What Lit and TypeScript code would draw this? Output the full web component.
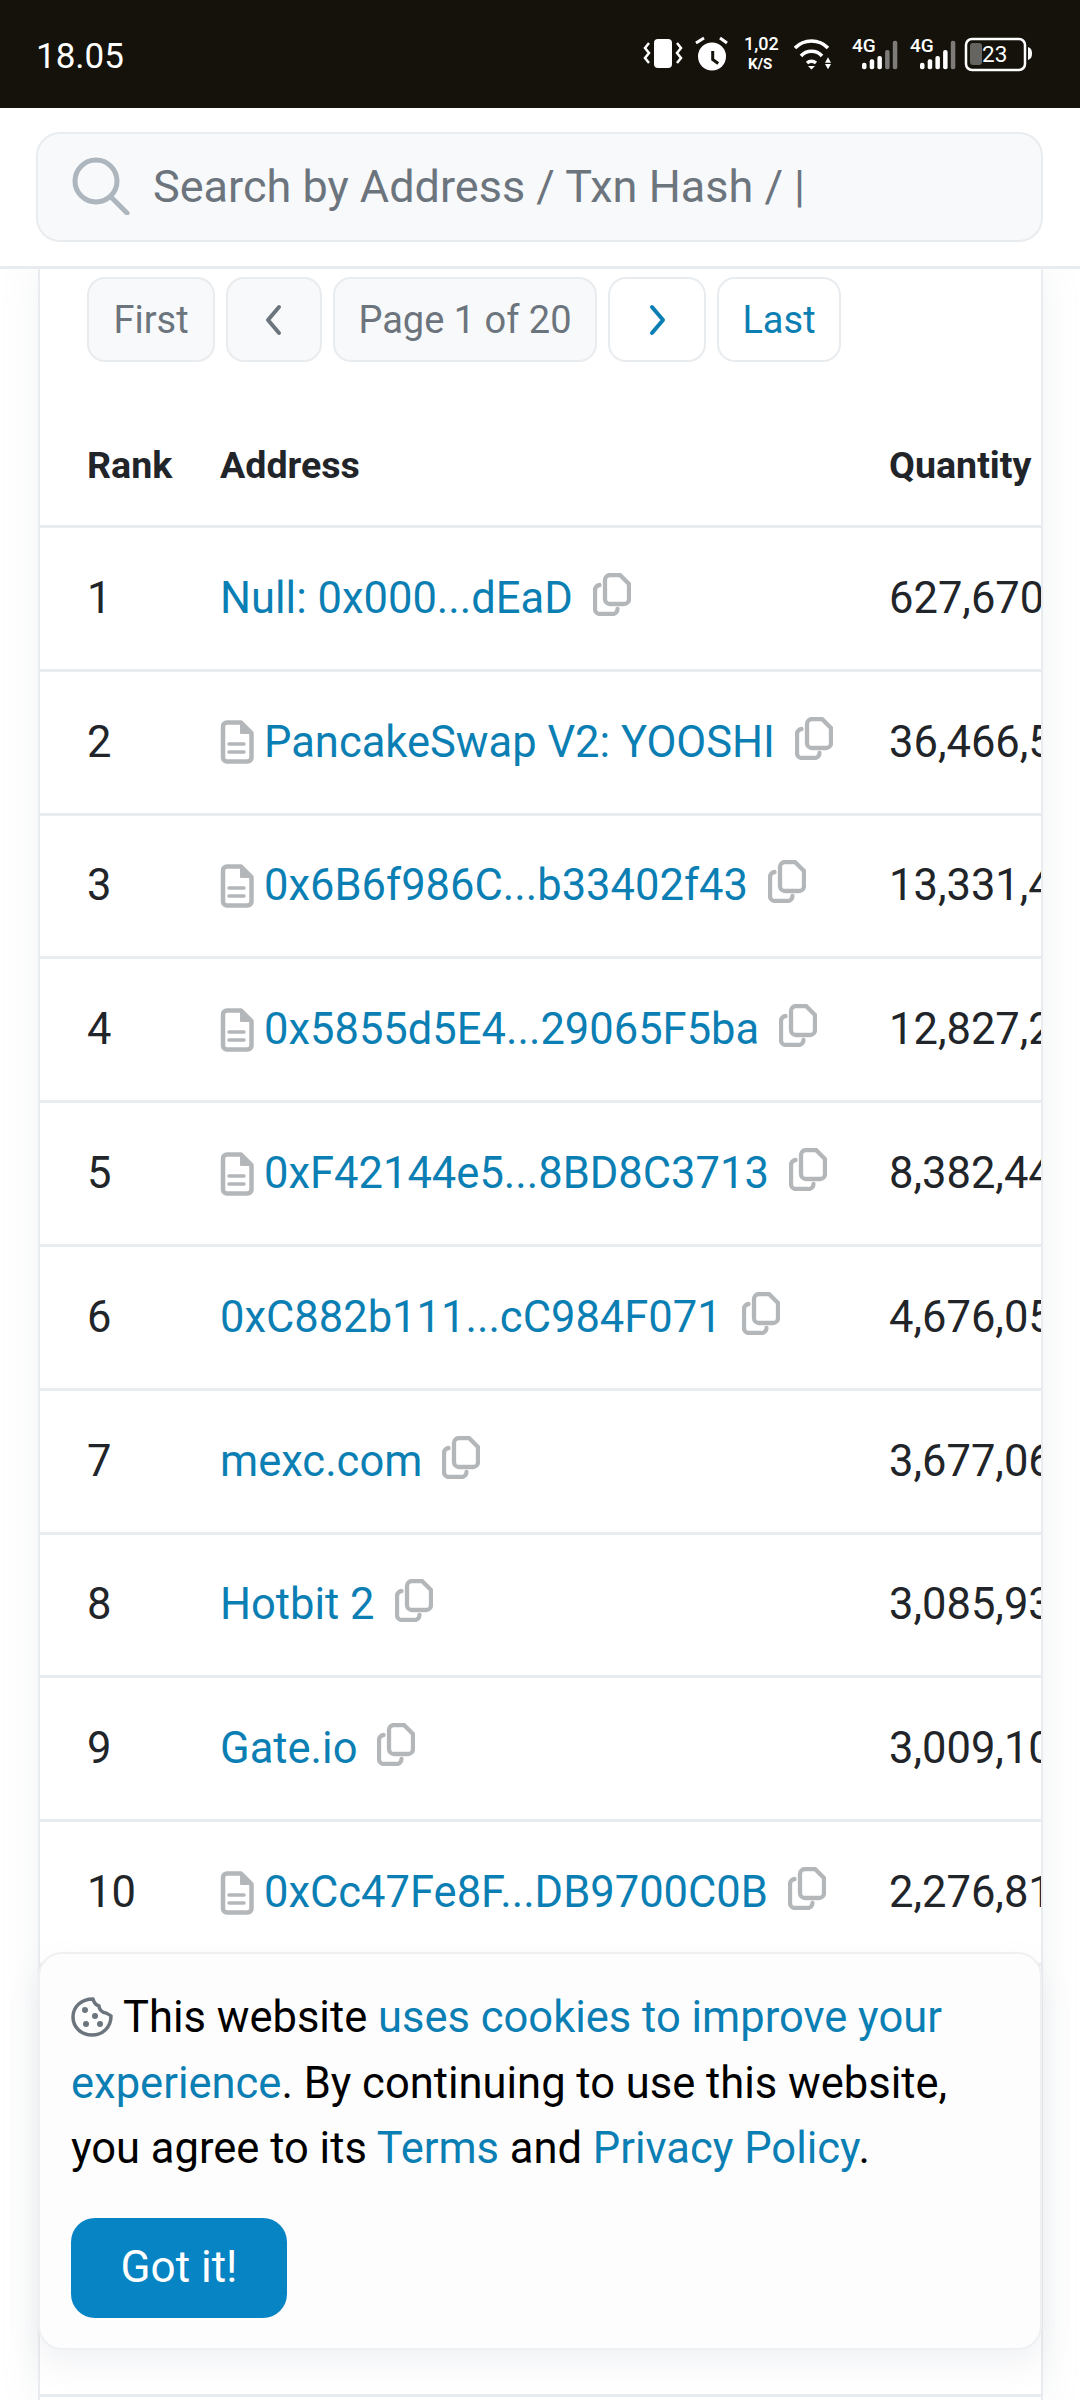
import { LitElement, css, html, svg } from 'lit';
import { customElement } from 'lit/decorators.js';

interface Holder {
  rank: number;
  name: string;
  contract: boolean;
  qty: string;
}

const HOLDERS: Holder[] = [
  { rank: 1, name: 'Null: 0x000...dEaD', contract: false, qty: '627,670' },
  { rank: 2, name: 'PancakeSwap V2: YOOSHI', contract: true, qty: '36,466,5' },
  { rank: 3, name: '0x6B6f986C...b33402f43', contract: true, qty: '13,331,4' },
  { rank: 4, name: '0x5855d5E4...29065F5ba', contract: true, qty: '12,827,2' },
  { rank: 5, name: '0xF42144e5...8BD8C3713', contract: true, qty: '8,382,44' },
  { rank: 6, name: '0xC882b111...cC984F071', contract: false, qty: '4,676,05' },
  { rank: 7, name: 'mexc.com', contract: false, qty: '3,677,06' },
  { rank: 8, name: 'Hotbit 2', contract: false, qty: '3,085,93' },
  { rank: 9, name: 'Gate.io', contract: false, qty: '3,009,10' },
  { rank: 10, name: '0xCc47Fe8F...DB9700C0B', contract: true, qty: '2,276,81' },
];

const fileIcon = svg`<svg class="file" viewBox="0 0 34 44" fill="none" stroke="#b4b7ba" stroke-width="4.5" stroke-linejoin="round">
  <path d="M7 2.5h14l10.5 10.5v24.500a4 4 0 0 1-4 4H7a4 4 0 0 1-4-4V6.500a4 4 0 0 1 4-4z" />
  <path d="M21 3v10h10" fill="#b4b7ba" stroke-width="2" />
  <path d="M9 24h15M9 32h15" stroke-linecap="round" stroke-width="3.500" />
</svg>`;

const copyIcon = svg`<svg class="copy" viewBox="0 0 38 43" fill="none" stroke="#b4b7ba" stroke-width="4.3" stroke-linecap="round" stroke-linejoin="round">
  <path d="M17 2h10l9 9v15a5 5 0 0 1-5 5H17a5 5 0 0 1-5-5V7a5 5 0 0 1 5-5z" />
  <path d="M6.500 12a5 5 0 0 0-4.500 5v19a5 5 0 0 0 5 5h12a5 5 0 0 0 5.500-5" />
</svg>`;

@customElement('app-root')
export class AppRoot extends LitElement {
  static styles = css`
    :host {
      display: block;
      position: relative;
      width: 1080px;
      height: 2400px;
      overflow: hidden;
      background: #fff;
      font-family: Roboto, 'Liberation Sans', sans-serif;
      color: #212529;
    }

    .status {
      height: 108px;
      background: #14120b;
      color: #fff;
      display: flex;
      align-items: center;
      justify-content: space-between;
      padding: 2px 40px 0 36px;
      box-sizing: border-box;
    }
    .time {
      font-size: 35px;
      padding-top: 2px;
    }
    .status-icons {
      display: block;
      width: 400px;
      height: 50px;
      overflow: visible;
    }

    .top {
      position: relative;
      z-index: 1;
      height: 161px;
      box-sizing: border-box;
      background: #fff;
      border-bottom: 3px solid #e9ecef;
      padding: 24px 37px 0 36px;
    }
    .search {
      height: 110px;
      box-sizing: border-box;
      background: #f8f9fa;
      border: 2px solid #e9ecef;
      border-radius: 24px;
      display: flex;
      align-items: center;
      gap: 23px;
      padding: 0 0 2px 34px;
      color: #6c757d;
      font-size: 45px;
    }
    .search svg {
      width: 58px;
      height: 58px;
      flex: none;
    }

    .card {
      margin: 0 37px 0 38px;
      height: 2131px;
      box-sizing: border-box;
      background: #fff;
      border-left: 2px solid #e9ecef;
      border-right: 2px solid #e9ecef;
      box-shadow: 0 0 36px rgba(140, 152, 164, 0.13);
      overflow: hidden;
    }
    .pager {
      display: flex;
      gap: 11px;
      padding: 8px 0 0 47px;
      height: 85px;
    }
    .pg {
      box-sizing: border-box;
      height: 85px;
      display: flex;
      align-items: center;
      justify-content: center;
      border: 2px solid #e9ecef;
      border-radius: 18px;
      font-size: 38px;
      background: #fff;
      color: #0b7fb3;
    }
    .pg.off {
      background: #f8f9fa;
      color: #6c757d;
    }
    .pg svg {
      width: 22px;
      height: 34px;
    }
    .w-first {
      width: 128px;
    }
    .w-prev {
      width: 96px;
    }
    .w-page {
      width: 264px;
    }
    .w-next {
      width: 98px;
    }
    .w-last {
      width: 124px;
    }

    .row {
      display: grid;
      grid-template-columns: 133px 669px 1fr;
      align-items: center;
      height: 143.8px;
      box-sizing: border-box;
      border-bottom: 3px solid #e9ecef;
      padding-left: 47px;
      font-size: 43.5px;
      white-space: nowrap;
    }
    .row.head {
      height: 166px;
      padding-top: 42px;
      font-weight: 700;
      font-size: 37.6px;
    }
    .addr {
      display: flex;
      align-items: center;
      color: #0b7fb3;
    }
    .file {
      width: 34px;
      height: 44px;
      margin-right: 10px;
      flex: none;
    }
    .copy {
      width: 38px;
      height: 43px;
      margin: -8px 0 0 20px;
      flex: none;
    }
    .qty {
      overflow: hidden;
    }

    .cookie {
      position: absolute;
      left: 38px;
      top: 1952px;
      width: 1004px;
      height: 398px;
      box-sizing: border-box;
      background: #fdfdfe;
      border: 2px solid #eef0f2;
      border-radius: 24px;
      box-shadow: 0 14px 30px rgba(140, 152, 164, 0.12);
      padding: 31px 31px;
      color: #000;
      font-size: 43.5px;
      line-height: 65.5px;
    }
    .cookie p {
      margin: 0;
    }
    .cookie a {
      color: #0b7fb3;
    }
    .cookie svg {
      width: 42px;
      height: 42px;
      vertical-align: -6px;
      margin-right: 10px;
    }
    .got {
      margin-top: 36px;
      width: 216px;
      height: 100px;
      display: flex;
      align-items: center;
      justify-content: center;
      background: #0784c3;
      border-radius: 24px;
      color: #fff;
      font-size: 44px;
    }
  `;

  private renderSignal(x: number, dimFrom: number) {
    const tops = [32.7, 29.3, 26, 20, 10.7];
    return svg`
      <text x=${x} y="22" font-size="19" font-weight="500">4G</text>
      ${tops.map(
        (top, i) => svg`<rect x=${x + 10 + i * 7.7} y=${top} width="4.500" height=${39.3 - top} rx="2" opacity=${i >= dimFrom ? 0.45 : 1} />`,
      )}
    `;
  }

  private renderStatusIcons() {
    return html`<svg class="status-icons" viewBox="0 0 400 50" font-family="Roboto, sans-serif" fill="#fff">
      <rect x="14" y="9" width="18" height="29" rx="4" />
      <path d="M9 13l-4 5 4 5-4 5 4 5M37 13l4 5-4 5 4 5-4 5" fill="none" stroke="#fff" stroke-width="2.500" />
      <circle cx="72" cy="26.500" r="14" />
      <path d="M72.700 21v8.500l5.500 4" fill="none" stroke="#14120b" stroke-width="3" />
      <path d="M56 13l8-5M80 8l7 5" stroke="#fff" stroke-width="3" />
      <text x="104" y="20" font-size="18" font-weight="500">1,02</text>
      <text x="108" y="39" font-size="15" font-weight="700">K/S</text>
      <path d="M155 18a23 23 0 0 1 33 0M161 26a14 14 0 0 1 21 0M167 33a7 7 0 0 1 9 0" fill="none" stroke="#fff" stroke-width="3.500" />
      <path d="M168 36h7l-3.500 3.500zM188 27.300l3 5.400h-6zM185 34h6l-3 5.300z" />
      ${this.renderSignal(212, 3)}
      ${this.renderSignal(270, 4)}
      <rect x="326" y="9" width="59" height="31" rx="6" fill="none" stroke="#fff" stroke-width="2.500" />
      <rect x="330" y="13" width="12" height="22" rx="3" opacity=".35" />
      <path d="M388 17c3 1 4 3 4 6.500s-1 5.500-4 6.500z" />
      <text x="342" y="32" font-size="22.500">23</text>
    </svg>`;
  }

  render() {
    return html`
      <div class="status">
        <span class="time">18.05</span>
        ${this.renderStatusIcons()}
      </div>
      <div class="top">
        <div class="search">
          <svg viewBox="0 0 58 58" fill="none" stroke="#adb5bd" stroke-width="5" stroke-linecap="round">
            <circle cx="24" cy="24" r="21" />
            <path d="M39 40l16 16" />
          </svg>
          <span>Search by Address / Txn Hash / |</span>
        </div>
      </div>
      <div class="card">
        <div class="pager">
          <div class="pg off w-first">First</div>
          <div class="pg off w-prev">
            <svg viewBox="0 0 22 34" fill="none" stroke="#6c757d" stroke-width="4" stroke-linecap="round" stroke-linejoin="round"><path d="M16 4L5 17l11 13" /></svg>
          </div>
          <div class="pg off w-page">Page 1 of 20</div>
          <div class="pg w-next">
            <svg viewBox="0 0 22 34" fill="none" stroke="#0b7fb3" stroke-width="4" stroke-linecap="round" stroke-linejoin="round"><path d="M6 4l11 13L6 30" /></svg>
          </div>
          <div class="pg w-last">Last</div>
        </div>
        <div class="row head">
          <span>Rank</span><span>Address</span><span>Quantity</span>
        </div>
        ${HOLDERS.map(
          (h) => html`<div class="row">
            <span>${h.rank}</span>
            <span class="addr">${h.contract ? fileIcon : ''}${h.name}${copyIcon}</span>
            <span class="qty">${h.qty}</span>
          </div>`,
        )}
        <div class="row"></div>
        <div class="row"></div>
        <div class="row"></div>
      </div>
      <div class="cookie">
        <p>
          <svg viewBox="0 0 42 42" fill="none" stroke="#6c757d" stroke-width="3.500" stroke-linejoin="round">
            <path d="M22 3c1 4 3 6 6 7 0 3 3 7 7 7 2 1 4 2 5 3 0 11-8 19-19 19S2 31 2 21 10 3 22 3z" />
            <g fill="#6c757d" stroke="none">
              <circle cx="14" cy="14" r="3" /><circle cx="24" cy="20" r="3" /><circle cx="15" cy="28" r="3" /><circle cx="29" cy="28" r="3" />
            </g>
          </svg>This website <a>uses cookies to improve your experience</a>. By continuing to use this website, you agree to its <a>Terms</a> and <a>Privacy Policy</a>.
        </p>
        <div class="got">Got it!</div>
      </div>
    `;
  }
}
